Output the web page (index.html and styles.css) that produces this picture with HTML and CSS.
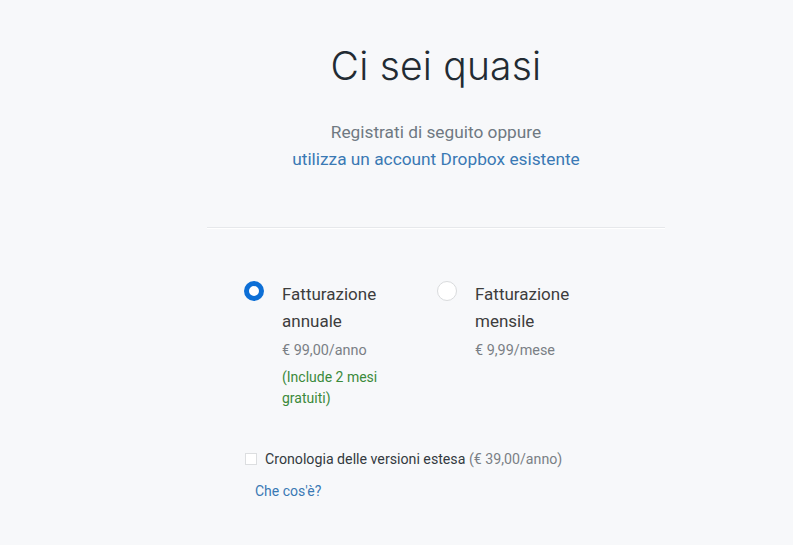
FILE: index.html
```html
<!DOCTYPE HTML>
<html>
<head>
	<meta charset="utf-8">
	<title>Ci sei quasi</title>
	<link rel="stylesheet" href="styles.css">
</head>
<body>
	<div class="page">
		<div class="intro">
			<h1 class="title">Ci sei quasi</h1>
			<p class="sub">Registrati di seguito oppure<br>
			<a class="link" href="#">utilizza un account Dropbox esistente</a></p>
		</div>

		<div class="plans">
			<!-- annual plan, selected -->
			<div class="plan">
				<span class="radio checked"></span>
				<div class="plan-text">
					<div class="plan-name">Fatturazione<br>annuale</div>
					<div class="price">€ 99,00/anno</div>
					<div class="promo">(Include 2 mesi<br>gratuiti)</div>
				</div>
			</div>
			<div class="plan">
				<span class="radio"></span>
				<div class="plan-text">
					<div class="plan-name">Fatturazione<br>mensile</div>
					<div class="price">€ 9,99/mese</div>
				</div>
			</div>
		</div>

		<div class="extra">
			<div class="check-row">
				<span class="box"></span>
				<span>Cronologia delle versioni estesa <span class="muted">(€ 39,00/anno)</span></span>
			</div>
			<a class="link what" href="#">Che cos'è?</a>
		</div>
	</div>
</body>
</html>
```

FILE: styles.css
```css
body {
	margin: 0;
	background: #f7f8fa;
	font-family: Roboto, "Liberation Sans", sans-serif;
	color: #3d464d;
}

.page {
	width: 458px;
	margin-left: 207px;
}

.intro {
	text-align: center;
	padding-top: 40px;
	padding-bottom: 54px;
	border-bottom: 1px solid #e6e8eb;
	box-shadow: 0 1px 0 #fff;
}

.title {
	margin: 0;
	font-family: Inter, Lato, sans-serif;
	font-weight: 300;
	font-size: 39px;
	line-height: 52px;
	color: #222b33;
	letter-spacing: 0.2px;
}

.sub {
	margin: 27px 0 0;
	font-size: 17.3px;
	line-height: 27px;
	color: #6f7982;
}

.link {
	color: #3a79b4;
	text-decoration: none;
}

.plans {
	display: flex;
	padding-left: 37px;
	padding-top: 53px;
}

.plan {
	display: flex;
	width: 193px;
}

.radio {
	width: 20px;
	height: 20px;
	box-sizing: border-box;
	border-radius: 50%;
	border: 1px solid #d9dbdd;
	background: #fff;
	margin-right: 18px;
	flex: none;
}

.radio.checked {
	border: 5px solid #0d6fd6;
}

.plan-name {
	font-size: 17px;
	line-height: 27px;
	color: #3d3d3d;
}

.price {
	font-size: 14.4px;
	line-height: 20px;
	color: #7a7f85;
	margin-top: 6px;
}

.promo {
	font-size: 14px;
	line-height: 21px;
	color: #3b8a3b;
	margin-top: 6px;
}

.extra {
	padding-left: 38px;
	padding-top: 40px;
}

.check-row {
	display: flex;
	align-items: center;
	font-size: 14.2px;
	line-height: 20px;
	color: #333a40;
}

.box {
	width: 12px;
	height: 12px;
	box-sizing: border-box;
	border: 1px solid #dcdee0;
	background: #fff;
	margin-right: 8px;
	flex: none;
}

.muted {
	color: #7a7f85;
}

.what {
	display: block;
	font-size: 14px;
	line-height: 20px;
	margin-top: 12px;
	margin-left: 10px;
}
```
